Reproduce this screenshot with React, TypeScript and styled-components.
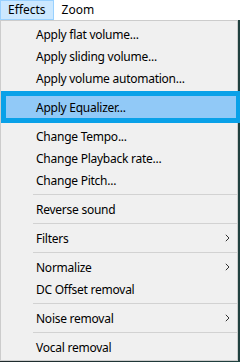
import React from "react";
import styled, { createGlobalStyle } from "styled-components";

const GlobalStyle = createGlobalStyle`
  html, body {
    margin: 0;
    padding: 0;
    background: #1e2a2c;
  }
  body {
    font-family: "Noto Sans", "Segoe UI", sans-serif;
    font-size: 12px;
    letter-spacing: -0.25px;
    color: #000;
  }
`;

const Screen = styled.div`
  width: 240px;
  height: 362px;
  display: flex;
  flex-direction: column;
  background: linear-gradient(90deg, #1e2a2c 0, #20403f 100%);
  overflow: hidden;
`;

const MenuBar = styled.div`
  height: 20px;
  background: #ffffff;
  display: flex;
  align-items: stretch;
  flex-shrink: 0;
`;

const BarItem = styled.div<{ $open?: boolean }>`
  display: flex;
  align-items: center;
  padding: 0 7px;
  letter-spacing: 0;
  border: 1px solid ${(p) => (p.$open ? "#99d1ff" : "transparent")};
  background: ${(p) => (p.$open ? "#cce8ff" : "transparent")};
  line-height: 1;
`;

const Dropdown = styled.div`
  width: 238px;
  box-sizing: border-box;
  border: 1px solid #cccccc;
  background: #f0f0f0;
  padding: 2px 0 2px 2px;
  display: flex;
  flex-direction: column;
`;

const Item = styled.div<{ $active?: boolean }>`
  position: relative;
  height: 22px;
  display: flex;
  align-items: center;
  justify-content: space-between;
  padding: 0 7px 0 ${(p) => (p.$active ? 30 : 33)}px;
  margin: 0 ${(p) => (p.$active ? "1px" : "0")} 0 ${(p) => (p.$active ? "3px" : "0")};
  white-space: nowrap;
  background: ${(p) => (p.$active ? "#91c9f7" : "transparent")};
  box-shadow: ${(p) => (p.$active ? "0 0 0 5px #0aa1e8" : "none")};
  z-index: ${(p) => (p.$active ? 1 : 0)};
`;

const Separator = styled.div`
  height: 7px;
  display: flex;
  align-items: center;
  padding-left: 30px;
  &::after {
    content: "";
    flex: 1;
    height: 1px;
    background: #d2d2d2;
  }
`;

const Chevron = () => (
  <svg width="5" height="8" viewBox="0 0 5 8">
    <path d="M0.8 0.8 L4 4 L0.8 7.2" fill="none" stroke="#333" strokeWidth="1" />
  </svg>
);

type Entry = { label: string; sub?: boolean; active?: boolean } | "sep";

const entries: Entry[] = [
  { label: "Apply flat volume..." },
  { label: "Apply sliding volume..." },
  { label: "Apply volume automation..." },
  "sep",
  { label: "Apply Equalizer...", active: true },
  "sep",
  { label: "Change Tempo..." },
  { label: "Change Playback rate..." },
  { label: "Change Pitch..." },
  "sep",
  { label: "Reverse sound" },
  "sep",
  { label: "Filters", sub: true },
  "sep",
  { label: "Normalize", sub: true },
  { label: "DC Offset removal" },
  "sep",
  { label: "Noise removal", sub: true },
  "sep",
  { label: "Vocal removal" },
];

export default function App() {
  return (
    <>
      <GlobalStyle />
      <Screen>
        <MenuBar>
          <BarItem $open>Effects</BarItem>
          <BarItem>Zoom</BarItem>
        </MenuBar>
        <Dropdown>
          {entries.map((e, i) =>
            e === "sep" ? (
              <Separator key={i} />
            ) : (
              <Item key={i} $active={e.active}>
                <span>{e.label}</span>
                {e.sub && <Chevron />}
              </Item>
            )
          )}
        </Dropdown>
      </Screen>
    </>
  );
}
